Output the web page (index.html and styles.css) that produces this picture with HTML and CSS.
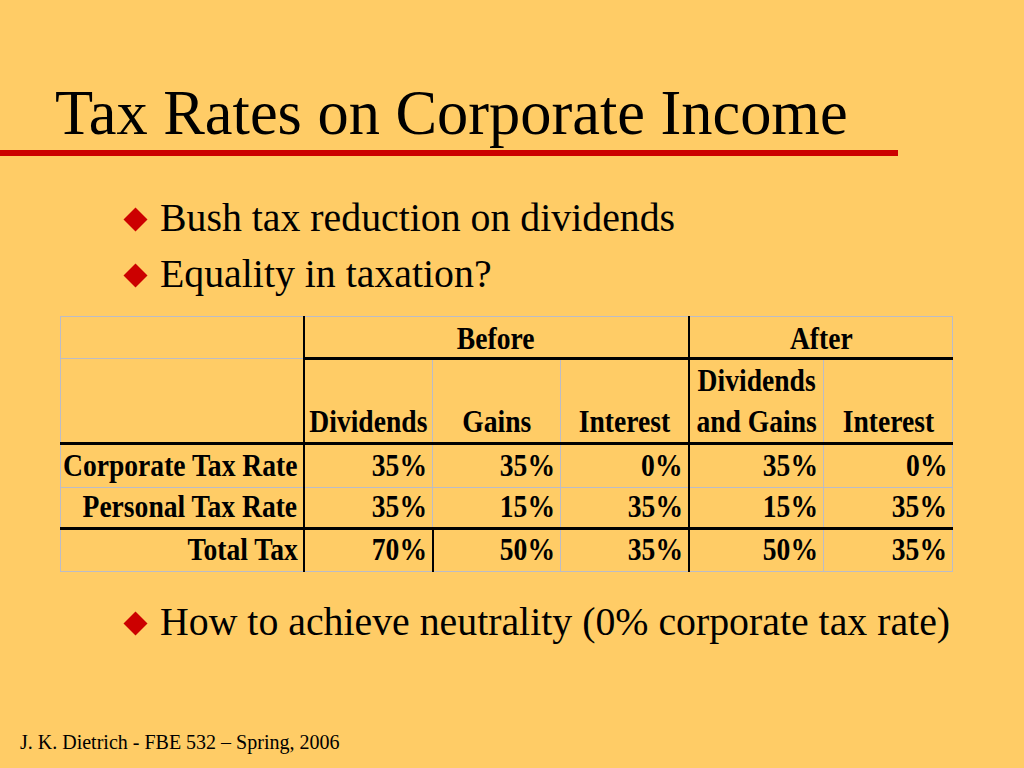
FILE: index.html
```html
<!DOCTYPE html>
<html>
<head>
<meta charset="utf-8">
<title>Tax Rates on Corporate Income</title>
<link rel="stylesheet" href="styles.css">
</head>
<body>
<div class="slide">
  <h1 class="title">Tax Rates on Corporate Income</h1>
  <div class="rule"></div>
  <ul class="bullets bullets-top">
    <li><span class="dia"></span>Bush tax reduction on dividends</li>
    <li><span class="dia"></span>Equality in taxation?</li>
  </ul>
  <table class="tax">
    <colgroup>
      <col class="w-label"><col class="w-a"><col class="w-b"><col class="w-c"><col class="w-d"><col class="w-e">
    </colgroup>
    <tr class="r1">
      <td class="lab"></td>
      <td colspan="3" class="grp sep"><div class="in ctr"><span class="x">Before</span></div></td>
      <td colspan="2" class="grp"><div class="in ctr"><span class="x">After</span></div></td>
    </tr>
    <tr class="r2 thick">
      <td class="lab"></td>
      <td><div class="in ctr"><span class="x">Dividends</span></div></td>
      <td><div class="in ctr"><span class="x">Gains</span></div></td>
      <td class="sep"><div class="in ctr"><span class="x">Interest</span></div></td>
      <td><div class="in ctr"><span class="x">Dividends<br>and Gains</span></div></td>
      <td><div class="in ctr"><span class="x">Interest</span></div></td>
    </tr>
    <tr class="r3 body">
      <td class="lab"><div class="in rt"><span class="x">Corporate Tax Rate</span></div></td>
      <td><div class="in rt"><span class="x">35%</span></div></td>
      <td><div class="in rt"><span class="x">35%</span></div></td>
      <td class="sep"><div class="in rt"><span class="x">0%</span></div></td>
      <td><div class="in rt"><span class="x">35%</span></div></td>
      <td><div class="in rt"><span class="x">0%</span></div></td>
    </tr>
    <tr class="r4 body thick">
      <td class="lab"><div class="in rt"><span class="x">Personal Tax Rate</span></div></td>
      <td><div class="in rt"><span class="x">35%</span></div></td>
      <td><div class="in rt"><span class="x">15%</span></div></td>
      <td class="sep"><div class="in rt"><span class="x">35%</span></div></td>
      <td><div class="in rt"><span class="x">15%</span></div></td>
      <td><div class="in rt"><span class="x">35%</span></div></td>
    </tr>
    <tr class="r5 body">
      <td class="lab"><div class="in rt"><span class="x">Total Tax</span></div></td>
      <td class="sep"><div class="in rt"><span class="x">70%</span></div></td>
      <td><div class="in rt"><span class="x">50%</span></div></td>
      <td class="sep"><div class="in rt"><span class="x">35%</span></div></td>
      <td><div class="in rt"><span class="x">50%</span></div></td>
      <td><div class="in rt"><span class="x">35%</span></div></td>
    </tr>
  </table>
  <ul class="bullets bullets-bottom">
    <li><span class="dia"></span>How to achieve neutrality (0% corporate tax rate)</li>
  </ul>
  <div class="footer">J. K. Dietrich - FBE 532 – Spring, 2006</div>
</div>
</body>
</html>
```

FILE: styles.css
```css
html, body {
  margin: 0;
  padding: 0;
  background: #ffcc66;
}

.slide {
  width: 1024px;
  height: 768px;
  display: flex;
  flex-direction: column;
  background: #ffcc66;
  color: #000;
  font-family: "Liberation Serif", "Times New Roman", serif;
  overflow: hidden;
}

.title {
  margin: 0;
  padding: 77px 0 0 55px;
  font-size: 62.4px;
  font-weight: normal;
  line-height: 72px;
  white-space: nowrap;
}

.rule {
  margin-top: 1px;
  width: 898px;
  height: 6px;
  background: #cc0000;
}

.bullets {
  list-style: none;
  margin: 0;
  padding: 0 0 0 127px;
  font-size: 39.8px;
  line-height: 56px;
}

.bullets li {
  white-space: nowrap;
}

.bullets-top {
  margin-top: 34px;
}

.bullets-bottom {
  margin-top: 22px;
}

.dia {
  display: inline-block;
  width: 17px;
  height: 17px;
  background: #cc0000;
  transform: rotate(45deg);
  margin-right: 16px;
  vertical-align: 3.5px;
}

/* table */
.tax {
  margin: 14px 0 0 60px;
  width: 892px;
  border-collapse: collapse;
  table-layout: fixed;
  font-family: "Liberation Serif", "Times New Roman", serif;
  font-weight: bold;
  font-size: 31px;
}

.w-label { width: 243px; }
.w-a { width: 129px; }
.w-b { width: 128px; }
.w-c { width: 128px; }
.w-d { width: 135px; }
.w-e { width: 129px; }

.tax td {
  border: 1px solid #bcbcc6;
  padding: 0 5px 0 5px;
  vertical-align: bottom;
}

.tax td.lab {
  border-right: 2px solid #000;
}

.tax td.sep {
  border-right: 2px solid #000;
}

.tax tr.r1 td.grp {
  border-bottom: 3px solid #000;
}

.tax tr.thick td {
  border-bottom: 3px solid #000;
}

.tax tr.r1 { height: 42px; }
.tax tr.r2 { height: 85px; }
.tax tr.r3 { height: 44px; }
.tax tr.r4 { height: 41px; }
.tax tr.r5 { height: 43px; }

.in {
  display: flex;
  line-height: 41px;
  white-space: nowrap;
}

.tax tr.r1 .in {
  line-height: 37px;
}

.tax tr.body td {
  padding-bottom: 4px;
}

.tax tr.r4 td {
  padding-bottom: 3px;
}

.tax tr.body .in {
  line-height: 34px;
}

.in.ctr {
  justify-content: center;
}

.in.rt {
  justify-content: flex-end;
}

.x {
  display: inline-block;
  flex: none;
  text-align: center;
  transform: scaleX(0.89);
}

.in.ctr .x {
  transform-origin: center;
}

.in.rt .x {
  transform-origin: right;
}

.footer {
  margin-top: auto;
  padding: 0 0 14px 20px;
  font-size: 20px;
  line-height: 24px;
}
```
